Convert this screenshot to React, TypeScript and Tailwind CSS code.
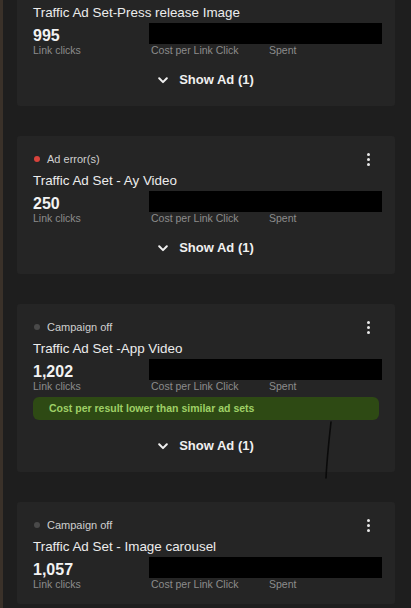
type AdSet = {
  status?: { label: string; dot: string }
  name: string
  clicks: string
  note?: string
  showAd: boolean
}

const adSets: AdSet[] = [
  { name: "Traffic Ad Set-Press release Image", clicks: "995", showAd: true },
  { status: { label: "Ad error(s)", dot: "bg-[#d8433c]" }, name: "Traffic Ad Set - Ay Video", clicks: "250", showAd: true },
  {
    status: { label: "Campaign off", dot: "bg-[#4a4a4a]" },
    name: "Traffic Ad Set -App Video",
    clicks: "1,202",
    note: "Cost per result lower than similar ad sets",
    showAd: true,
  },
  { status: { label: "Campaign off", dot: "bg-[#4a4a4a]" }, name: "Traffic Ad Set - Image carousel", clicks: "1,057", showAd: false },
]

function Kebab() {
  return (
    <div className="flex flex-col items-center gap-[2px] mr-[9px]">
      <span className="w-[3px] h-[3px] rounded-full bg-[#e8e8e8]" />
      <span className="w-[3px] h-[3px] rounded-full bg-[#e8e8e8]" />
      <span className="w-[3px] h-[3px] rounded-full bg-[#e8e8e8]" />
    </div>
  )
}

function Chevron() {
  return (
    <svg width="10" height="7" viewBox="0 0 10 7" fill="none">
      <path d="M1.2 1.3 5 5.1 8.8 1.3" stroke="#f0f0f0" strokeWidth="2" strokeLinecap="round" strokeLinejoin="round" />
    </svg>
  )
}

function AdSetCard({ ad, first }: { ad: AdSet; first?: boolean }) {
  return (
    <div className={`bg-[#252525] rounded-[3px] px-4 pt-[17px] ${ad.showAd ? "pb-[18px]" : "pb-[14px]"} ${first ? "mt-[-32px]" : ""}`}>
      <div className="h-[12px] flex items-center justify-between">
        {ad.status ? (
          <div className="flex items-center">
            <span className={`w-[6px] h-[6px] rounded-full ml-[1px] ${ad.status.dot}`} />
            <span className="ml-[7px] text-[11px] text-[#cfcfcf] leading-[12px]">{ad.status.label}</span>
          </div>
        ) : (
          <span />
        )}
        {ad.status && <Kebab />}
      </div>
      <div className="mt-[8px] text-[13.4px] leading-[16px] text-[#ececec]">{ad.name}</div>
      <div className="relative mt-[7px]">
        <div className="grid grid-cols-[118px_118px_1fr]">
          <div>
            <div className="text-[16px] leading-[16px] font-bold text-[#f2f2f2]">{ad.clicks}</div>
            <div className="text-[10.5px] leading-[12px] text-[#8c8c8c]">Link clicks</div>
          </div>
          <div className="flex flex-col justify-end">
            <div className="text-[10.5px] leading-[12px] text-[#8c8c8c]">Cost per Link Click</div>
          </div>
          <div className="flex flex-col justify-end">
            <div className="text-[10.5px] leading-[12px] text-[#8c8c8c]">Spent</div>
          </div>
        </div>
        <div className="absolute left-[116px] top-[-5px] w-[233px] h-[21px] bg-black" />
      </div>
      {ad.note && (
        <div className="mt-[5px] h-[23px] rounded-[6px] bg-[#2e4a14] flex items-center pl-4 text-[10.5px] font-semibold text-[#9fd066]">
          {ad.note}
        </div>
      )}
      {ad.showAd && (
        <div className={`${ad.note ? "mt-[18px]" : "mt-[16px]"} flex items-center justify-center gap-[11px] h-[16px]`}>
          <Chevron />
          <span className="text-[13px] font-bold text-[#f0f0f0] leading-[16px]">Show Ad (1)</span>
        </div>
      )}
    </div>
  )
}

export default function App() {
  return (
    <div className="relative w-[411px] h-[608px] overflow-hidden bg-[#1e1e1e] flex" style={{ fontFamily: '"Liberation Sans", Arial, sans-serif' }}>
      <div className="w-[3px] bg-[#3a3129] shrink-0" />
      <div className="ml-[14px] w-[378px] flex flex-col gap-[30px]">
        {adSets.map((ad, i) => (
          <AdSetCard key={ad.name} ad={ad} first={i === 0} />
        ))}
      </div>
      <svg className="absolute left-0 top-0 pointer-events-none" width="411" height="608">
        <path d="M331 422 C329 440 327 458 326 478" stroke="#0a0a0a" strokeWidth="1.6" fill="none" strokeLinecap="round" />
      </svg>
    </div>
  )
}
